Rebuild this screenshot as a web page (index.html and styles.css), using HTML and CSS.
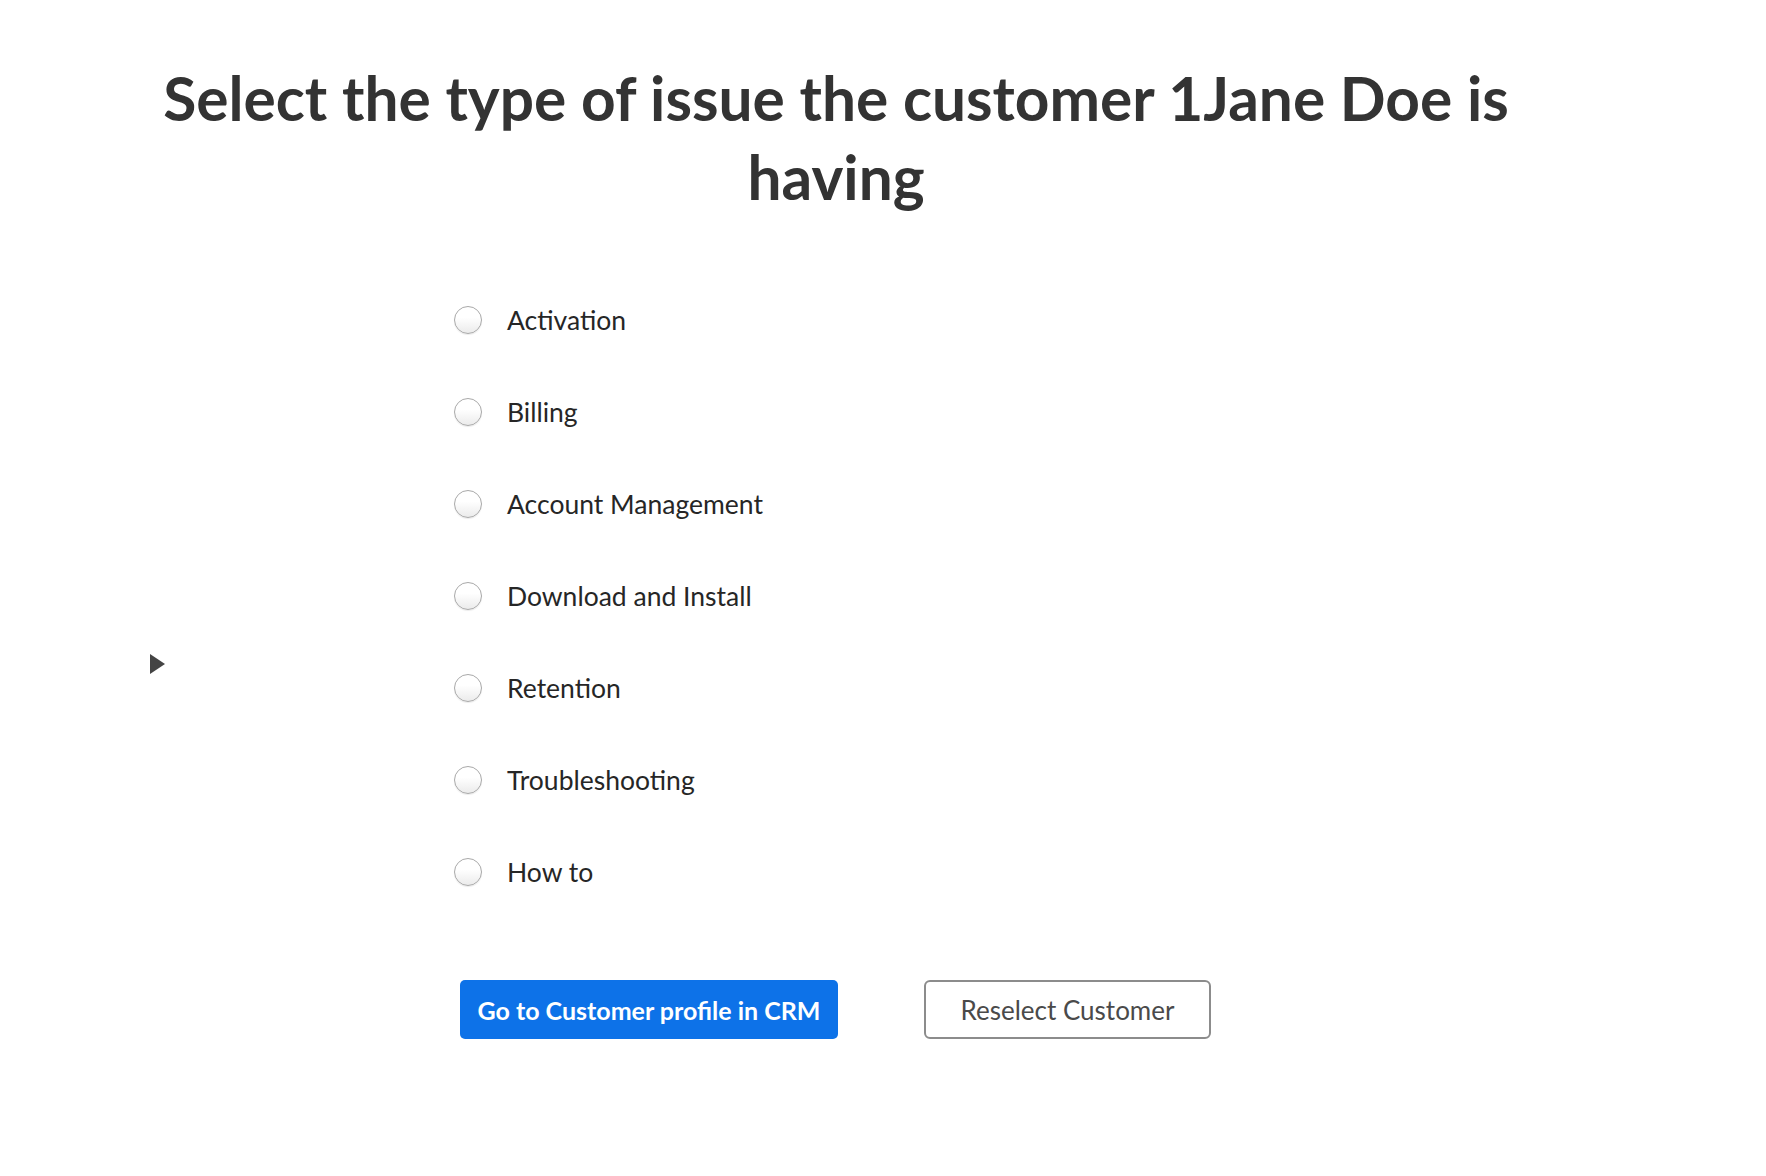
FILE: index.html
```html
<!DOCTYPE html>
<html lang="en">
<head>
<meta charset="utf-8">
<title>Select issue type</title>
<link rel="stylesheet" href="styles.css">
</head>
<body>
<div class="page">
  <h1 class="title">Select the type of issue the customer 1Jane Doe is having</h1>
  <div class="content">
    <div class="side">
      <span class="toggle"></span>
    </div>
    <div class="form">
      <ul class="options">
        <li class="option"><span class="radio"></span><span class="label">Activation</span></li>
        <li class="option"><span class="radio"></span><span class="label">Billing</span></li>
        <li class="option"><span class="radio"></span><span class="label">Account Management</span></li>
        <li class="option"><span class="radio"></span><span class="label">Download and Install</span></li>
        <li class="option"><span class="radio"></span><span class="label">Retention</span></li>
        <li class="option"><span class="radio"></span><span class="label">Troubleshooting</span></li>
        <li class="option"><span class="radio"></span><span class="label">How to</span></li>
      </ul>
      <div class="actions">
        <button class="btn btn-primary">Go to Customer profile in CRM</button>
        <button class="btn btn-secondary">Reselect Customer</button>
      </div>
    </div>
  </div>
</div>
</body>
</html>
```
FILE: styles.css
```css
html, body {
  margin: 0;
  padding: 0;
  background: #ffffff;
}
body {
  font-family: Lato, "Open Sans", sans-serif;
  color: #2f2f2f;
}
.page {
  width: 1766px;
  padding-top: 58px;
}
.title {
  margin: 0 0 0 136px;
  width: 1400px;
  font-size: 60.4px;
  line-height: 79px;
  font-weight: 700;
  text-align: center;
  color: #333333;
}
.content {
  display: flex;
  margin-top: 58px;
}
.side {
  width: 304px;
  padding-left: 150px;
  padding-top: 380px;
}
.toggle {
  display: block;
  width: 0;
  height: 0;
  border-top: 10px solid transparent;
  border-bottom: 10px solid transparent;
  border-left: 15px solid #444444;
}
.options {
  list-style: none;
  margin: 0;
  padding: 0;
}
.option {
  display: flex;
  align-items: center;
  height: 92px;
}
.radio {
  box-sizing: border-box;
  width: 28px;
  height: 28px;
  border-radius: 50%;
  border: 1px solid #a9a9a9;
  background: linear-gradient(#ffffff 40%, #ebebeb);
  box-shadow: 0 1px 1px rgba(0, 0, 0, 0.08);
  flex: none;
}
.label {
  margin-left: 25px;
  font-size: 26.5px;
  color: #262626;
}
.actions {
  display: flex;
  gap: 86px;
  margin-top: 62px;
  margin-left: 6px;
}
.btn {
  box-sizing: border-box;
  height: 59px;
  font-family: Lato, "Open Sans", sans-serif;
  font-size: 26px;
  border-radius: 5px;
  padding: 0;
  cursor: pointer;
}
.btn-primary {
  width: 378px;
  background: #0d72e8;
  border: none;
  color: #ffffff;
  font-weight: 700;
  font-size: 25px;
}
.btn-secondary {
  width: 287px;
  background: #ffffff;
  border: 2px solid #8c8c8c;
  color: #4a4a4a;
  border-radius: 6px;
}
```
